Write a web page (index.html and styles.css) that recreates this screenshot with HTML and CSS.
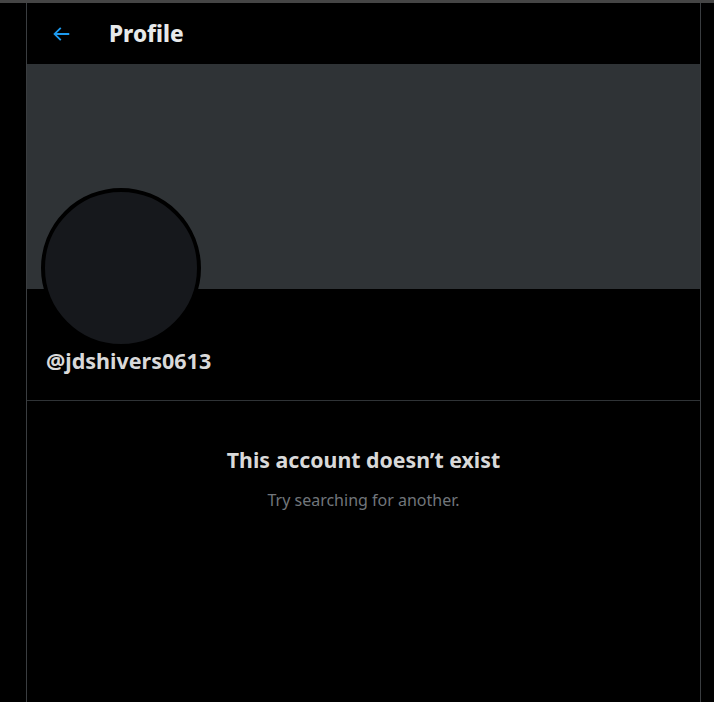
FILE: index.html
```html
<!DOCTYPE html>
<html>
<head>
<meta charset="utf-8">
<link rel="stylesheet" href="styles.css">
</head>
<body>
<div class="topbar"></div>
<div class="layout">
  <div class="side"></div>
  <main class="column">
    <header class="header">
      <span class="back">
        <svg viewBox="0 0 24 24" width="22" height="22"><path d="M7.414 13l5.043 5.04-1.414 1.42L3.586 12l7.457-7.46 1.414 1.42L7.414 11H21v2H7.414z" fill="#1d9bf0"/></svg>
      </span>
      <h1 class="title">Profile</h1>
    </header>
    <div class="banner"></div>
    <div class="info">
      <div class="avatar"></div>
      <div class="handle">@jdshivers0613</div>
    </div>
    <section class="empty">
      <h2 class="empty-title">This account doesn’t exist</h2>
      <p class="empty-sub">Try searching for another.</p>
    </section>
  </main>
  <div class="rest"></div>
</div>
</body>
</html>
```
FILE: styles.css
```css
* { box-sizing: border-box; }
html, body { margin: 0; padding: 0; background: #000; height: 100%; overflow: hidden; }
body { font-family: "Noto Sans", "Open Sans", sans-serif; color: #e7e9ea; }
.topbar { height: 3px; background: #454545; }
.layout { display: flex; height: 699px; }
.side { width: 26px; flex: none; }
.column { width: 675px; flex: none; border-left: 1px solid #3a3d40; border-right: 1px solid #3a3d40; display: flex; flex-direction: column; }
.rest { flex: 1; }
.header { height: 61px; display: flex; align-items: center; padding-left: 23px; }
.back { width: 22px; height: 22px; display: flex; }
.title { margin: 0 0 0 37px; font-size: 22.5px; font-weight: 800; color: #e7e9ea; line-height: 26px; }
.banner { height: 225px; background: #2f3336; }
.info { position: relative; height: 112px; border-bottom: 1px solid #2f3336; padding: 59px 0 0 19px; }
.avatar { position: absolute; left: 14px; top: -101px; width: 160px; height: 160px; border-radius: 50%; background: #16181c; border: 4px solid #000; }
.handle { font-size: 21.5px; font-weight: 700; color: #d9d9d9; line-height: 26px; }
.empty { display: flex; flex-direction: column; align-items: center; padding-top: 45px; }
.empty-title { margin: 0; font-size: 21.3px; font-weight: 700; color: #d9d9d9; line-height: 28px; }
.empty-sub { margin: 16px 0 0; font-size: 16px; color: #71767b; line-height: 20px; }
```
